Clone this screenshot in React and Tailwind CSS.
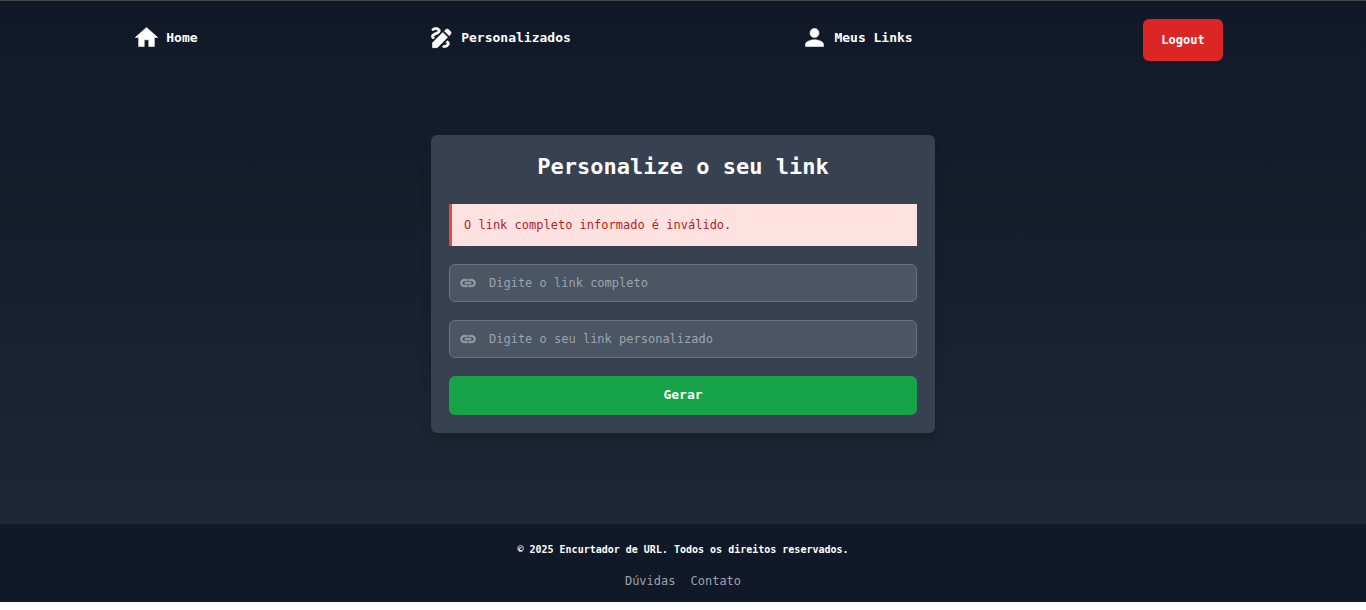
import { MdDraw, MdHome, MdLink, MdPerson } from "react-icons/md";

function NavItem({ icon: Icon, label }) {
  return (
    <li className="pt-[5px]">
      <a href="#" className="flex items-center gap-[6px] text-[13px] font-bold text-white hover:text-gray-300">
        <Icon className="size-[27px] stroke-[0.5] [&>path[fill=none]]:stroke-none" aria-hidden="true" />
        {label}
      </a>
    </li>
  );
}

function LinkField({ id, label }) {
  return (
    <div className="flex items-center rounded-md border border-[#6b7280] bg-[#4b5563] pl-[9px]">
      <label htmlFor={id} className="shrink-0 text-[#9ca3af]">
        <MdLink className="size-[18px] stroke-[0.8] [&>path[fill=none]]:stroke-none" aria-hidden="true" />
      </label>
      <input
        id={id}
        type="text"
        aria-label={label}
        placeholder={label}
        className="h-9 min-w-0 flex-1 bg-transparent px-3 text-xs text-white outline-none placeholder:text-[#9ca3af]"
      />
    </div>
  );
}

export default function App() {
  return (
    <div className="bg-white pb-2 font-['DejaVu_Sans_Mono',monospace]">
      <div className="flex min-h-[calc(100vh-8px)] flex-col border-t border-[#474747] bg-linear-to-b from-[#111827] to-[#1f2937]">
        <header className="py-[18px] pl-[18px] pr-7">
          <nav>
            <ul className="flex items-start justify-around">
              <NavItem icon={MdHome} label="Home" />
              <NavItem icon={MdDraw} label="Personalizados" />
              <NavItem icon={MdPerson} label="Meus Links" />
              <li>
                <button
                  type="button"
                  className="h-[42px] rounded-md bg-[#dc2626] px-[18px] text-xs font-bold text-white hover:bg-[#b91c1c]"
                >
                  Logout
                </button>
              </li>
            </ul>
          </nav>
        </header>

        <main className="flex flex-1 items-center justify-center pb-9">
          <form className="flex w-full max-w-[504px] flex-col gap-[18px] rounded-md bg-[#374151] p-[18px] shadow-lg">
            <h1 className="mb-[6px] text-center text-[22px] font-bold leading-[27px] text-white">
              Personalize o seu link
            </h1>
            <p
              role="alert"
              className="border-l-[3px] border-[#ef4444] bg-[#fee2e2] px-3 py-[13px] text-xs text-[#b91c1c]"
            >
              O link completo informado é inválido.
            </p>
            <LinkField id="full-link" label="Digite o link completo" />
            <LinkField id="custom-link" label="Digite o seu link personalizado" />
            <button
              type="button"
              className="h-[39px] rounded-md bg-[#16a34a] text-[13px] font-bold text-white hover:bg-[#15803d]"
            >
              Gerar
            </button>
          </form>
        </main>

        <footer className="flex flex-col items-center gap-[15px] bg-[#111827] pb-[13px] pt-[18px]">
          <p className="text-[10px] font-bold leading-4 text-white">
            © 2025 Encurtador de URL. Todos os direitos reservados.
          </p>
          <div className="flex gap-[15px] text-xs text-[#9ca3af]">
            <a href="#" className="hover:text-white">Dúvidas</a>
            <a href="#" className="hover:text-white">Contato</a>
          </div>
        </footer>
      </div>
    </div>
  );
}
